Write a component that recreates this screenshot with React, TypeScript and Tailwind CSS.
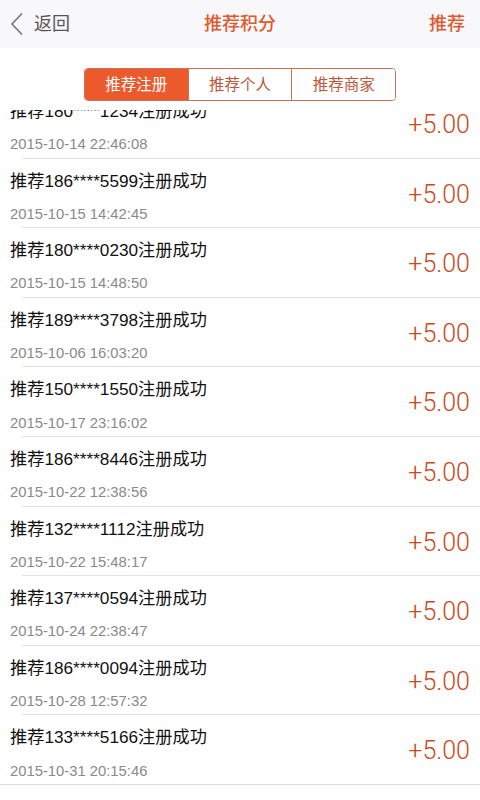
const rows = [
  { phone: "180****1234", time: "2015-10-14 22:46:08" },
  { phone: "186****5599", time: "2015-10-15 14:42:45" },
  { phone: "180****0230", time: "2015-10-15 14:48:50" },
  { phone: "189****3798", time: "2015-10-06 16:03:20" },
  { phone: "150****1550", time: "2015-10-17 23:16:02" },
  { phone: "186****8446", time: "2015-10-22 12:38:56" },
  { phone: "132****1112", time: "2015-10-22 15:48:17" },
  { phone: "137****0594", time: "2015-10-24 22:38:47" },
  { phone: "186****0094", time: "2015-10-28 12:57:32" },
  { phone: "133****5166", time: "2015-10-31 20:15:46" },
];

const tabs = ["推荐注册", "推荐个人", "推荐商家"];

export default function App() {
  return (
    <div
      className="w-[480px] h-[800px] bg-white overflow-hidden flex flex-col"
      style={{ fontFamily: '"Liberation Sans", "Noto Sans CJK SC", sans-serif' }}
    >
      {/* nav bar */}
      <div className="h-12 shrink-0 bg-[#f8f7f9] flex items-center justify-between px-[10px] relative z-20">
        <div className="flex items-center gap-[10px] text-[18px] text-[#555]">
          <svg width="14" height="24" viewBox="0 0 14 24" fill="none">
            <polyline points="12,1.5 2,12 12,22.5" stroke="#777" strokeWidth="1.6" />
          </svg>
          <span>返回</span>
        </div>
        <div className="absolute left-1/2 -translate-x-1/2 text-[18px] font-medium text-[#df5a30]">
          推荐积分
        </div>
        <div className="text-[18px] font-medium text-[#df5a30] pr-[5px]">推荐</div>
      </div>

      {/* segmented control */}
      <div className="h-[62px] shrink-0 bg-white relative z-10 flex items-start justify-center pt-5">
        <div className="flex w-[312px] h-[33px] border border-[#c8735c] rounded-[4px] overflow-hidden text-[15.5px]">
          {tabs.map((t, i) => (
            <div
              key={t}
              className={
                i === 0
                  ? "flex-1 flex items-center justify-center bg-[#ec5a2c] text-white"
                  : "flex-1 flex items-center justify-center bg-white text-[#c0563a] border-l border-[#c8735c]"
              }
            >
              {t}
            </div>
          ))}
        </div>
      </div>

      {/* list, scrolled a little under the tabs */}
      <div className="-mt-[21px]">
        {rows.map((r, i) => (
          <div key={r.time} className="relative h-[69.6px] flex items-center justify-between px-[10px]">
            <div className="flex flex-col self-start pt-[14px]">
              <div className="text-[17.2px] text-[#111] leading-none">推荐{r.phone}注册成功</div>
              <div className="text-[14.8px] text-[#8a8a8a] leading-none mt-[17px]">{r.time}</div>
            </div>
            <div className="text-[25px] text-[#c84a20] font-light pt-[2px]" style={{ fontFamily: "Roboto, sans-serif" }}>
              +5.00
            </div>
            <div
              className={
                i === rows.length - 1
                  ? "absolute bottom-0 left-0 right-0 h-px bg-[#dedede]"
                  : "absolute bottom-0 left-[22px] right-0 h-px bg-[#e3e3e3]"
              }
            />
          </div>
        ))}
      </div>
    </div>
  );
}
